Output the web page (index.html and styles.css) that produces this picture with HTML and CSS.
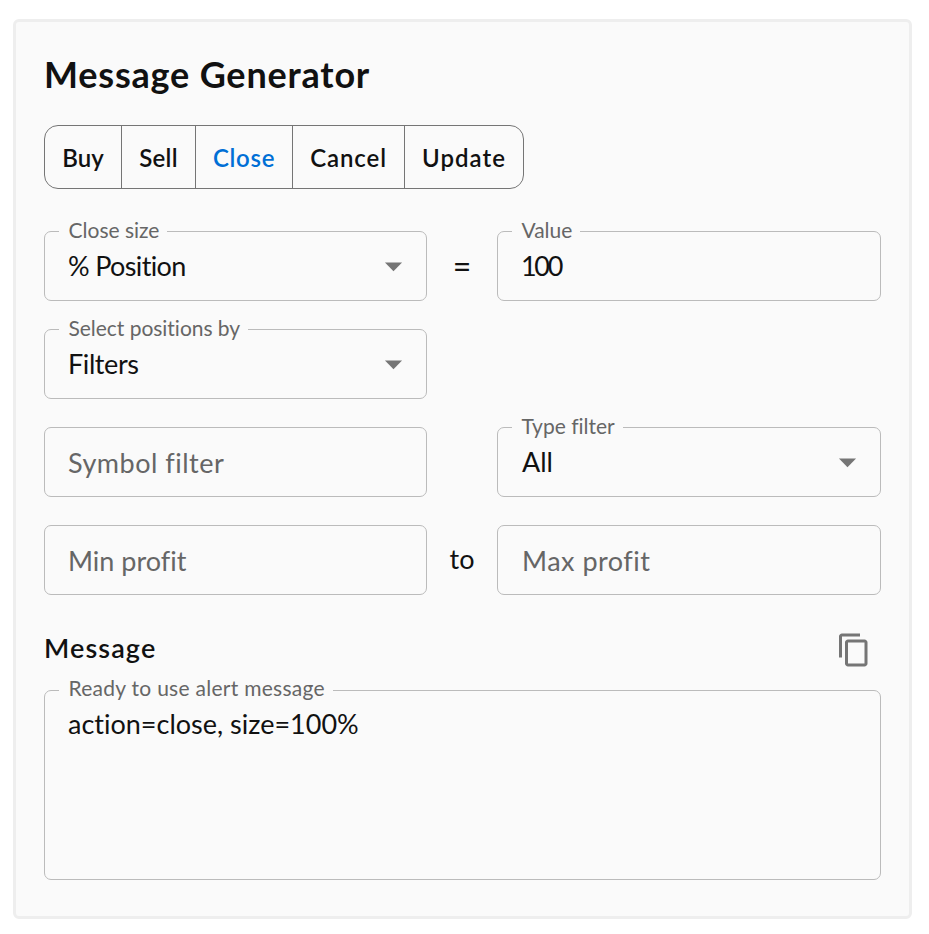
FILE: index.html
```html
<!DOCTYPE html>
<html lang="en">
<head>
    <meta charset="UTF-8">
    <meta name="viewport" content="width=device-width, initial-scale=1.0">
    <title>Message Generator</title>
    <link rel="stylesheet" href="styles.css">
</head>
<body>

    <main class="card">
        <h1>Message Generator</h1>

        <!-- Action -->
        <div class="actions">
            <button class="action buy">Buy</button>
            <button class="action sell">Sell</button>
            <button class="action close active">Close</button>
            <button class="action cancel">Cancel</button>
            <button class="action update">Update</button>
        </div>

        <!-- Parameters -->
        <div class="form-grid">
            <div class="field">
                <span class="label">Close size</span>
                <span class="value position">% Position</span>
                <svg class="arrow" viewBox="0 0 24 24"><path d="M7 10l5 5 5-5z"/></svg>
            </div>
            <div class="separator equals">=</div>
            <div class="field">
                <span class="label">Value</span>
                <span class="value number">100</span>
            </div>

            <div class="field">
                <span class="label select-by">Select positions by</span>
                <span class="value filters">Filters</span>
                <svg class="arrow" viewBox="0 0 24 24"><path d="M7 10l5 5 5-5z"/></svg>
            </div>
            <div></div>
            <div></div>

            <div class="field">
                <span class="placeholder symbol">Symbol filter</span>
            </div>
            <div></div>
            <div class="field">
                <span class="label">Type filter</span>
                <span class="value all">All</span>
                <svg class="arrow" viewBox="0 0 24 24"><path d="M7 10l5 5 5-5z"/></svg>
            </div>

            <div class="field">
                <span class="placeholder">Min profit</span>
            </div>
            <div class="separator to">to</div>
            <div class="field">
                <span class="placeholder max">Max profit</span>
            </div>
        </div>

        <!-- Result -->
        <div class="message-header">
            <h2>Message</h2>
            <svg class="copy-icon" viewBox="0 0 24 24"><path d="M16 1H4c-1.1 0-2 .9-2 2v14h2V3h12V1zm3 4H8c-1.1 0-2 .9-2 2v14c0 1.1.9 2 2 2h11c1.1 0 2-.9 2-2V7c0-1.1-.9-2-2-2zm0 16H8V7h11v14z"/></svg>
        </div>
        <div class="field message-box">
            <span class="label ready">Ready to use alert message</span>
            <span class="value">action=close, size=100%</span>
        </div>
    </main>

</body>
</html>
```
FILE: styles.css
```css
* {
    box-sizing: border-box;
}

body {
    font-family: Lato, "Open Sans", sans-serif;
    font-variant-ligatures: none;
    margin: 0;
    padding: 19px 17px 15px 13px;
    background-color: #fff;
    color: #111;
}

.card {
    height: 900px;
    padding: 28px;
    background-color: #fafafa;
    border: 3px solid #eee;
    border-radius: 6px;
}

h1 {
    margin: 0;
    height: 75px;
    font-size: 36px;
    font-weight: 700;
    letter-spacing: 0.8px;
    line-height: 48px;
    white-space: nowrap;
}

/* Action buttons */
.actions {
    display: flex;
    width: 480px;
    height: 64px;
    border: 1px solid #757575;
    border-radius: 14px;
}

.action {
    padding: 0;
    background: none;
    border: none;
    border-right: 1px solid #757575;
    color: #111;
    font-family: inherit;
    font-size: 24px;
    font-weight: 600;
}

.action:last-child {
    border-right: none;
}

.action.active {
    color: #006fd6;
}

.buy {
    width: 77px;
}

.sell {
    width: 74px;
    letter-spacing: 0.3px;
}

.close {
    width: 97px;
    letter-spacing: 0.7px;
}

.cancel {
    width: 112px;
    letter-spacing: 0.9px;
}

.update {
    width: 118px;
    letter-spacing: 1px;
}

/* Form fields */
.form-grid {
    display: grid;
    grid-template-columns: 383px 70px 384px;
    grid-auto-rows: 70px;
    row-gap: 28px;
    margin-top: 42px;
}

.field {
    display: flex;
    align-items: center;
    justify-content: space-between;
    position: relative;
    padding: 0 12px 0 23px;
    border: 1px solid #bbb;
    border-radius: 7px;
}

.label {
    position: absolute;
    top: -15px;
    left: 14px;
    padding: 0 8px 0 9.5px;
    background-color: #fafafa;
    color: #666;
    font-size: 21px;
    line-height: 26px;
    white-space: nowrap;
}

.select-by {
    letter-spacing: -0.03px;
}

.ready {
    letter-spacing: 0.27px;
}

.value,
.separator {
    font-size: 27px;
    line-height: 34px;
    white-space: nowrap;
}

.position {
    letter-spacing: -0.65px;
}

.number {
    letter-spacing: -2.3px;
}

.filters {
    letter-spacing: -0.4px;
}

.all {
    padding-left: 1px;
}

.placeholder {
    padding-top: 1px;
    color: #666;
    font-size: 27px;
    line-height: 34px;
}

.symbol {
    letter-spacing: 0.5px;
}

.max {
    padding-left: 1px;
    letter-spacing: 0.5px;
}

.separator {
    display: flex;
    align-items: center;
    justify-content: center;
}

.equals {
    font-size: 32px;
}

.to {
    padding-bottom: 2px;
}

.arrow {
    width: 41px;
    height: 42px;
    fill: #757575;
}

/* Generated message */
.message-header {
    display: flex;
    align-items: center;
    justify-content: space-between;
    height: 55px;
    margin-top: 27px;
    padding-right: 9px;
}

h2 {
    margin: 0;
    padding-bottom: 4px;
    font-size: 27px;
    font-weight: 600;
    letter-spacing: 1.1px;
}

.copy-icon {
    width: 36px;
    height: 36px;
    fill: #757575;
}

.message-box {
    align-items: flex-start;
    height: 190px;
    margin-top: 13px;
    padding-top: 16px;
}

.message-box .label {
    top: -16px;
}
```
